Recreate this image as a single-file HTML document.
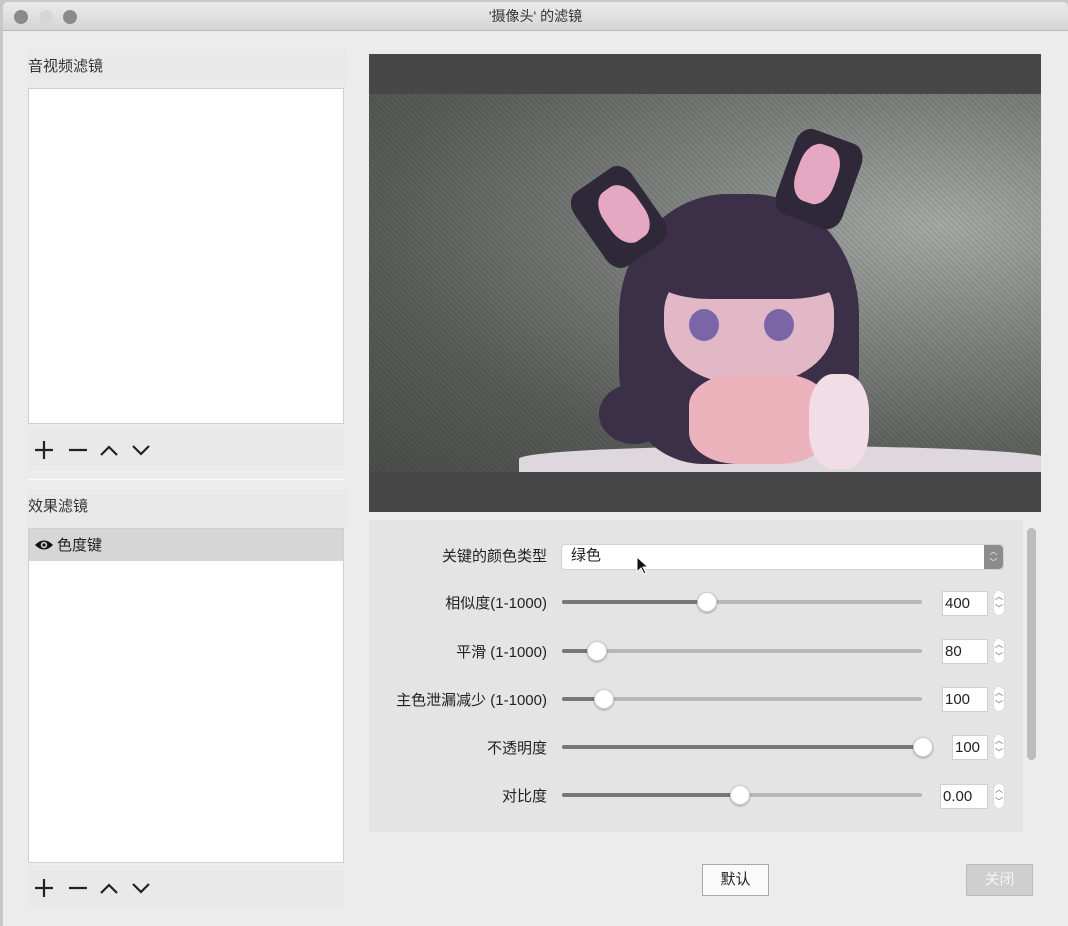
<!DOCTYPE html>
<html><head><meta charset="utf-8"><style>
*{box-sizing:border-box;margin:0;padding:0}
body{width:1068px;height:926px;background:#c8c8cc;font-family:"Liberation Sans","Noto Sans CJK SC",sans-serif;overflow:hidden;position:relative;font-size:14px;color:#222}
.win{position:absolute;left:3px;top:2px;width:1065px;height:924px;background:#ececec;border-radius:5px 5px 0 0;overflow:hidden}
.title{height:29px;background:linear-gradient(#ebebeb,#d5d5d5);border-bottom:1px solid #b9b9b9;text-align:center;line-height:29px;font-size:14px;color:#333}
.dot{position:absolute;top:8px;width:14px;height:14px;border-radius:50%;background:#8a8a8a}
.a{position:absolute}
.lbl{font-size:15px;color:#333}
.list{background:#fff;border:1px solid #cfcfcf}
.track{position:absolute;height:4px;background:#b8b8b8;border-radius:2px}
.fill{position:absolute;height:4px;background:#777;border-radius:2px}
.knob{position:absolute;width:20px;height:20px;border-radius:50%;background:#fff;border:1px solid #ccc;box-shadow:0 1px 2px rgba(0,0,0,.3)}
.spin{position:absolute;width:46px;height:25px;background:#fff;border:1px solid #cfcfcf;font-size:15px;line-height:23px;padding-left:2px}
.arr{position:absolute;width:12px;height:26px;background:#fff;border-radius:6px;border:1px solid #ddd;font-size:8px;line-height:12px;text-align:center;color:#555}
.btn{position:absolute;width:67px;height:32px;border:1px solid #aaa;background:#fafafa;text-align:center;line-height:30px;font-size:15px}
.rl{position:absolute;left:360px;width:184px;text-align:right;font-size:15px}
</style></head><body>
<div class="win">
<div class="title">'摄像头' 的滤镜</div>
<div class="dot" style="left:11px"></div><div class="dot" style="left:36px;background:#d6d6d6"></div><div class="dot" style="left:60px"></div>

<div class="a" style="left:24px;top:47px;width:320px;height:38px;background:#e9e9e9"></div>
<div class="a lbl" style="left:25px;top:53px">音视频滤镜</div>
<div class="a list" style="left:25px;top:86px;width:316px;height:336px"></div>
<div class="a" style="left:25px;top:426px;width:316px;height:42px;background:#e9e9e9"></div>
<svg class="a" style="left:28px;top:437px" width="124" height="22" stroke="#222" stroke-width="2.2" fill="none"><path d="M4 11h18M13 2v18M38 11h18M70 16l8-8 8 8M102 7l8 8 8-8"/></svg>
<div class="a" style="left:25px;top:477px;width:316px;height:1px;background:#fafafa"></div>
<div class="a" style="left:24px;top:488px;width:320px;height:38px;background:#e9e9e9"></div>
<div class="a lbl" style="left:25px;top:493px">效果滤镜</div>
<div class="a list" style="left:25px;top:526px;width:316px;height:335px"></div>
<div class="a" style="left:26px;top:527px;width:314px;height:32px;background:#d6d6d6"></div>
<svg class="a" style="left:31px;top:536px" width="20" height="14"><path d="M1 7Q10-2 19 7Q10 16 1 7Z" fill="#111"/><circle cx="10" cy="7" r="3.2" fill="#d6d6d6"/><circle cx="10" cy="7" r="1.6" fill="#111"/></svg>
<div class="a" style="left:54px;top:532px;font-size:15px">色度键</div>
<div class="a" style="left:25px;top:864px;width:316px;height:42px;background:#e9e9e9"></div>
<svg class="a" style="left:28px;top:875px" width="124" height="22" stroke="#222" stroke-width="2.2" fill="none"><path d="M4 11h18M13 2v18M38 11h18M70 16l8-8 8 8M102 7l8 8 8-8"/></svg>

<div class="a" style="left:366px;top:52px;width:672px;height:458px;background:#474747;overflow:hidden">
 <div class="a" style="left:0;top:40px;width:672px;height:378px;background:radial-gradient(ellipse at 85% 35%,#a8aca8 0%,#7f837f 35%,#5a5d5a 70%,#4c4e4c 100%)"></div>
 <div class="a" style="left:0;top:40px;width:672px;height:378px;background:repeating-linear-gradient(45deg,rgba(0,0,0,.08) 0 2px,transparent 2px 4px)"></div>
 <div class="a" style="left:150px;top:392px;width:530px;height:26px;background:#ded8de;border-radius:50% 50% 0 0"></div>
 <div class="a" style="left:250px;top:140px;width:240px;height:270px;background:#3c2f48;border-radius:45% 45% 35% 35%"></div>
 <div class="a" style="left:230px;top:330px;width:70px;height:60px;background:#3c2f48;border-radius:50%"></div>
 <div class="a" style="left:215px;top:118px;width:70px;height:90px;background:#2f2838;transform:rotate(-35deg);border-radius:20%"></div>
 <div class="a" style="left:235px;top:130px;width:40px;height:60px;background:#e6a7c2;transform:rotate(-35deg);border-radius:40%"></div>
 <div class="a" style="left:415px;top:80px;width:70px;height:90px;background:#2f2838;transform:rotate(20deg);border-radius:20%"></div>
 <div class="a" style="left:428px;top:90px;width:40px;height:60px;background:#e6a7c2;transform:rotate(20deg);border-radius:40%"></div>
 <div class="a" style="left:295px;top:200px;width:170px;height:130px;background:#e2b8c6;border-radius:45%"></div>
 <div class="a" style="left:285px;top:175px;width:190px;height:70px;background:#3c2f48;border-radius:50% 50% 30% 30%"></div>
 <div class="a" style="left:320px;top:255px;width:30px;height:32px;background:#7a66a6;border-radius:50%"></div>
 <div class="a" style="left:395px;top:255px;width:30px;height:32px;background:#7a66a6;border-radius:50%"></div>
 <div class="a" style="left:320px;top:320px;width:140px;height:90px;background:#ecb3bd;border-radius:35%"></div>
 <div class="a" style="left:440px;top:320px;width:60px;height:95px;background:#f2dde6;border-radius:40%"></div>
</div>

<div class="a" style="left:366px;top:518px;width:654px;height:312px;background:#e4e4e4"></div>
<div class="a" style="left:1024px;top:526px;width:9px;height:232px;background:#bdbdbd;border-radius:5px"></div>

<div class="rl" style="top:543px">关键的颜色类型</div>
<div class="a" style="left:558px;top:542px;width:443px;height:26px;background:#fff;border:1px solid #d2d2d2;border-radius:4px;font-size:15px;line-height:22px;padding-left:9px">绿色</div>
<div class="a" style="left:981px;top:543px;width:19px;height:24px;background:#8c8c8c;border-radius:0 4px 4px 0;color:#fff;font-size:8px;line-height:11px;text-align:center;padding-top:1px">︿<br>﹀</div>
<svg class="a" style="left:633px;top:554px" width="14" height="20"><path d="M1 1v15l4-4 3 6 2-1-3-6h5z" fill="#111" stroke="#fff"/></svg>

<div class="rl" style="top:590px">相似度(1-1000)</div>
<div class="rl" style="top:639px">平滑 (1-1000)</div>
<div class="rl" style="top:687px">主色泄漏减少 (1-1000)</div>
<div class="rl" style="top:735px">不透明度</div>
<div class="rl" style="top:783px">对比度</div>

<div class="track" style="left:559px;top:598px;width:360px"></div><div class="fill" style="left:559px;top:598px;width:145px"></div><div class="knob" style="left:694px;top:590px"></div>
<div class="track" style="left:559px;top:647px;width:360px"></div><div class="fill" style="left:559px;top:647px;width:35px"></div><div class="knob" style="left:584px;top:639px"></div>
<div class="track" style="left:559px;top:695px;width:360px"></div><div class="fill" style="left:559px;top:695px;width:42px"></div><div class="knob" style="left:591px;top:687px"></div>
<div class="track" style="left:559px;top:743px;width:360px"></div><div class="fill" style="left:559px;top:743px;width:360px"></div><div class="knob" style="left:910px;top:735px"></div>
<div class="track" style="left:559px;top:791px;width:360px"></div><div class="fill" style="left:559px;top:791px;width:178px"></div><div class="knob" style="left:727px;top:783px"></div>

<div class="spin" style="left:939px;top:589px">400</div><div class="arr" style="left:990px;top:588px">︿<br>﹀</div>
<div class="spin" style="left:939px;top:637px">80</div><div class="arr" style="left:990px;top:636px">︿<br>﹀</div>
<div class="spin" style="left:939px;top:685px">100</div><div class="arr" style="left:990px;top:684px">︿<br>﹀</div>
<div class="spin" style="left:949px;top:733px;width:36px">100</div><div class="arr" style="left:990px;top:732px">︿<br>﹀</div>
<div class="spin" style="left:937px;top:782px;width:48px">0.00</div><div class="arr" style="left:990px;top:781px">︿<br>﹀</div>

<div class="btn" style="left:699px;top:862px">默认</div>
<div class="btn" style="left:963px;top:862px;background:#cfcfcf;border-color:#bbb;color:#f4f4f4">关闭</div>
</div>
</body></html>
